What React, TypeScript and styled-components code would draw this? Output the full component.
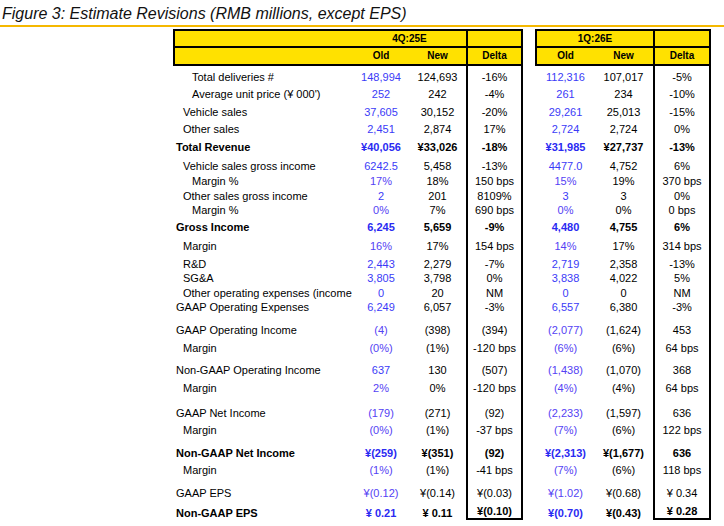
import styled, { createGlobalStyle } from "styled-components";

const GlobalStyle = createGlobalStyle`
  body {
    margin: 0;
    background: #ffffff;
    color: #000000;
    font-family: "Liberation Sans", Arial, sans-serif;
  }
`;

const BLUE = "#3b3bf7";
const VIOLET = "#5442f4";
const YELLOW = "#ffe100";

type Triple = [string, string, string];

type RowData = {
  label: string;
  level: 0 | 1 | 2;
  h: number;
  bold?: boolean;
  q4: Triple;
  q1: Triple;
};

const rows: RowData[] = [
  { label: "Total deliveries #", level: 2, h: 18, q4: ["148,994", "124,693", "-16%"], q1: ["112,316", "107,017", "-5%"] },
  { label: "Average unit price (¥ 000')", level: 2, h: 17, q4: ["252", "242", "-4%"], q1: ["261", "234", "-10%"] },
  { label: "Vehicle sales", level: 1, h: 18, q4: ["37,605", "30,152", "-20%"], q1: ["29,261", "25,013", "-15%"] },
  { label: "Other sales", level: 1, h: 17, q4: ["2,451", "2,874", "17%"], q1: ["2,724", "2,724", "0%"] },
  { label: "Total Revenue", level: 0, h: 18, bold: true, q4: ["¥40,056", "¥33,026", "-18%"], q1: ["¥31,985", "¥27,737", "-13%"] },
  { label: "Vehicle sales gross income", level: 1, h: 19, q4: ["6242.5", "5,458", "-13%"], q1: ["4477.0", "4,752", "6%"] },
  { label: "Margin %", level: 2, h: 15, q4: ["17%", "18%", "150 bps"], q1: ["15%", "19%", "370 bps"] },
  { label: "Other sales gross income", level: 1, h: 15, q4: ["2", "201", "8109%"], q1: ["3", "3", "0%"] },
  { label: "Margin %", level: 2, h: 14, q4: ["0%", "7%", "690 bps"], q1: ["0%", "0%", "0 bps"] },
  { label: "Gross Income", level: 0, h: 17, bold: true, q4: ["6,245", "5,659", "-9%"], q1: ["4,480", "4,755", "6%"] },
  { label: "Margin", level: 1, h: 19, q4: ["16%", "17%", "154 bps"], q1: ["14%", "17%", "314 bps"] },
  { label: "R&D", level: 1, h: 18, q4: ["2,443", "2,279", "-7%"], q1: ["2,719", "2,358", "-13%"] },
  { label: "SG&A", level: 1, h: 14, q4: ["3,805", "3,798", "0%"], q1: ["3,838", "4,022", "5%"] },
  { label: "Other operating expenses (income", level: 1, h: 15, q4: ["0", "20", "NM"], q1: ["0", "0", "NM"] },
  { label: "GAAP Operating Expenses", level: 0, h: 14, q4: ["6,249", "6,057", "-3%"], q1: ["6,557", "6,380", "-3%"] },
  { label: "GAAP Operating Income", level: 0, h: 23, q4: ["(4)", "(398)", "(394)"], q1: ["(2,077)", "(1,624)", "453"] },
  { label: "Margin", level: 1, h: 18, q4: ["(0%)", "(1%)", "-120 bps"], q1: ["(6%)", "(6%)", "64 bps"] },
  { label: "Non-GAAP Operating Income", level: 0, h: 22, q4: ["637", "130", "(507)"], q1: ["(1,438)", "(1,070)", "368"] },
  { label: "Margin", level: 1, h: 18, q4: ["2%", "0%", "-120 bps"], q1: ["(4%)", "(4%)", "64 bps"] },
  { label: "GAAP Net Income", level: 0, h: 25, q4: ["(179)", "(271)", "(92)"], q1: ["(2,233)", "(1,597)", "636"] },
  { label: "Margin", level: 1, h: 17, q4: ["(0%)", "(1%)", "-37 bps"], q1: ["(7%)", "(6%)", "122 bps"] },
  { label: "Non-GAAP Net Income", level: 0, h: 23, bold: true, q4: ["¥(259)", "¥(351)", "(92)"], q1: ["¥(2,313)", "¥(1,677)", "636"] },
  { label: "Margin", level: 1, h: 17, q4: ["(1%)", "(1%)", "-41 bps"], q1: ["(7%)", "(6%)", "118 bps"] },
  { label: "GAAP EPS", level: 0, h: 23, q4: ["¥(0.12)", "¥(0.14)", "¥(0.03)"], q1: ["¥(1.02)", "¥(0.68)", "¥ 0.34"] },
  { label: "Non-GAAP EPS", level: 0, h: 20, bold: true, q4: ["¥ 0.21", "¥ 0.11", "¥(0.10)"], q1: ["¥(0.70)", "¥(0.43)", "¥ 0.28"] },
];

const Title = styled.div`
  height: 20px;
  padding: 5px 0 0 2px;
  font-size: 16px;
  line-height: 18px;
  font-style: italic;
  color: #111111;
  border-bottom: 2px solid #f5b800;
`;

const Tables = styled.div`
  display: flex;
  gap: 12px;
  margin-top: 2px;
  padding-left: 173px;
`;

const Table = styled.div`
  display: flex;
  flex-direction: column;
`;

const Header = styled.div<{ $cols: string }>`
  display: grid;
  grid-template-columns: ${(p) => p.$cols};
  grid-template-rows: 17px 16px;
  background: ${YELLOW};
  border: 2px solid #000;
  font-size: 10px;
  font-weight: bold;
`;

const HeadCell = styled.div<{ $top?: boolean; $delta?: boolean; $span?: number }>`
  box-sizing: border-box;
  display: flex;
  align-items: center;
  justify-content: center;
  line-height: 12px;
  grid-column: span ${(p) => p.$span || 1};
  border-bottom: ${(p) => (p.$top ? "2px solid #000" : "none")};
  border-left: ${(p) => (p.$delta ? "2px solid #000" : "none")};
`;

const Row = styled.div<{ $cols: string; $h: number; $bold?: boolean }>`
  display: grid;
  grid-template-columns: ${(p) => p.$cols};
  height: ${(p) => p.$h}px;
  padding-left: 2px;
  font-size: 11px;
  font-weight: ${(p) => (p.$bold ? "bold" : "normal")};
`;

const Label = styled.div<{ $level: number }>`
  display: flex;
  align-items: flex-end;
  padding-left: ${(p) => [1, 8, 17][p.$level]}px;
  line-height: 14px;
  white-space: nowrap;
  overflow: hidden;
`;

const Value = styled.div<{ $color?: string }>`
  display: flex;
  align-items: flex-end;
  justify-content: center;
  line-height: 14px;
  white-space: nowrap;
  color: ${(p) => p.$color || "#000"};
`;

const DeltaValue = styled(Value)<{ $last?: boolean }>`
  box-sizing: border-box;
  border-left: 2px solid #000;
  border-right: 2px solid #000;
  border-bottom: ${(p) => (p.$last ? "2px solid #000" : "none")};
`;

function oldColor(v: string, bold?: boolean) {
  if (bold) return "#2a2af2";
  return v.includes("%") || v.includes("(") ? VIOLET : BLUE;
}

function EstimateTable({
  period,
  pick,
  labels,
  headCols,
  bodyCols,
}: {
  period: string;
  pick: (r: RowData) => Triple;
  labels?: boolean;
  headCols: string;
  bodyCols: string;
}) {
  return (
    <Table>
      <Header $cols={headCols}>
        {labels && <HeadCell $top />}
        <HeadCell $top $span={2}>
          {period}
        </HeadCell>
        <HeadCell $top $delta />
        {labels && <HeadCell />}
        <HeadCell>Old</HeadCell>
        <HeadCell>New</HeadCell>
        <HeadCell $delta>Delta</HeadCell>
      </Header>
      {rows.map((r, i) => {
        const [o, n, d] = pick(r);
        return (
          <Row key={i} $cols={bodyCols} $h={r.h} $bold={r.bold}>
            {labels && <Label $level={r.level}>{r.label}</Label>}
            <Value $color={oldColor(o, r.bold)}>{o}</Value>
            <Value>{n}</Value>
            <DeltaValue $last={i === rows.length - 1}>{d}</DeltaValue>
          </Row>
        );
      })}
    </Table>
  );
}

export default function App() {
  return (
    <>
      <GlobalStyle />
      <Title>Figure 3: Estimate Revisions (RMB millions, except EPS)</Title>
      <Tables>
        <EstimateTable
          period="4Q:25E"
          labels
          pick={(r) => r.q4}
          headCols="178px 56px 57px 55px"
          bodyCols="178px 56px 57px 57px"
        />
        <EstimateTable
          period="1Q:26E"
          pick={(r) => r.q1}
          headCols="57px 59px 56px"
          bodyCols="57px 59px 58px"
        />
      </Tables>
    </>
  );
}
